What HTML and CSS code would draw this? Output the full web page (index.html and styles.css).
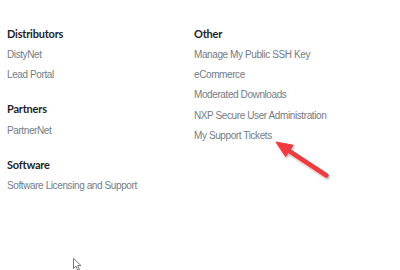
FILE: index.html
```html
<!DOCTYPE html>
<html>
<head>
<meta charset="utf-8">
<link rel="stylesheet" href="styles.css">
</head>
<body>
<div class="page">
  <div class="col">
    <section class="group">
      <h3 class="head">Distributors</h3>
      <a class="link">DistyNet</a>
      <a class="link">Lead Portal</a>
    </section>
    <section class="group">
      <h3 class="head">Partners</h3>
      <a class="link">PartnerNet</a>
    </section>
    <section class="group">
      <h3 class="head">Software</h3>
      <a class="link">Software Licensing and Support</a>
    </section>
  </div>
  <div class="col">
    <section class="group">
      <h3 class="head">Other</h3>
      <a class="link">Manage My Public SSH Key</a>
      <a class="link">eCommerce</a>
      <a class="link">Moderated Downloads</a>
      <a class="link">NXP Secure User Administration</a>
      <a class="link">My Support Tickets</a>
    </section>
  </div>
</div>
<svg class="arrow" width="70" height="50" viewBox="0 0 70 50">
  <defs>
    <filter id="sh" x="-20%" y="-20%" width="140%" height="140%">
      <feDropShadow dx="1" dy="1.5" stdDeviation="1" flood-color="#000" flood-opacity="0.3"/>
    </filter>
  </defs>
  <g filter="url(#sh)">
    <line x1="61.5" y1="40.5" x2="21" y2="13.8" stroke="#ee3a3c" stroke-width="4.5" stroke-linecap="round"/>
    <polygon points="11,7 28.2,10.2 20.6,21.6" fill="#ee3a3c" stroke="#ee3a3c" stroke-width="1" stroke-linejoin="round"/>
  </g>
</svg>
<svg class="cursor" width="10" height="14" viewBox="0 0 10 14">
  <path d="M0.5 0.5 L0.5 10.5 L3 8.2 L4.8 12.3 L6.4 11.6 L4.7 7.6 L8 7.6 Z" fill="#fff" stroke="#555" stroke-width="0.8"/>
</svg>
</body>
</html>
```
FILE: styles.css
```css
html, body { margin: 0; padding: 0; background: #fff; }
body { width: 400px; height: 270px; position: relative; overflow: hidden; }
.page {
  display: grid;
  grid-template-columns: 187px 1fr;
  padding: 26.5px 0 0 7px;
}
.col { display: flex; flex-direction: column; gap: 16.9px; }
.group { display: flex; flex-direction: column; }
.head {
  margin: 0 0 5.3px;
  font-family: Lato, "Open Sans", sans-serif;
  font-weight: 700;
  font-size: 11px;
  line-height: 13px;
  letter-spacing: -0.2px;
  color: #1f2328;
}
.link {
  font-family: "Liberation Sans", Arial, sans-serif;
  font-size: 10px;
  line-height: 20.3px;
  letter-spacing: -0.4px;
  color: #727c88;
  text-decoration: none;
}
.arrow { position: absolute; left: 265px; top: 135px; }
.cursor { position: absolute; left: 73px; top: 258px; }
```
